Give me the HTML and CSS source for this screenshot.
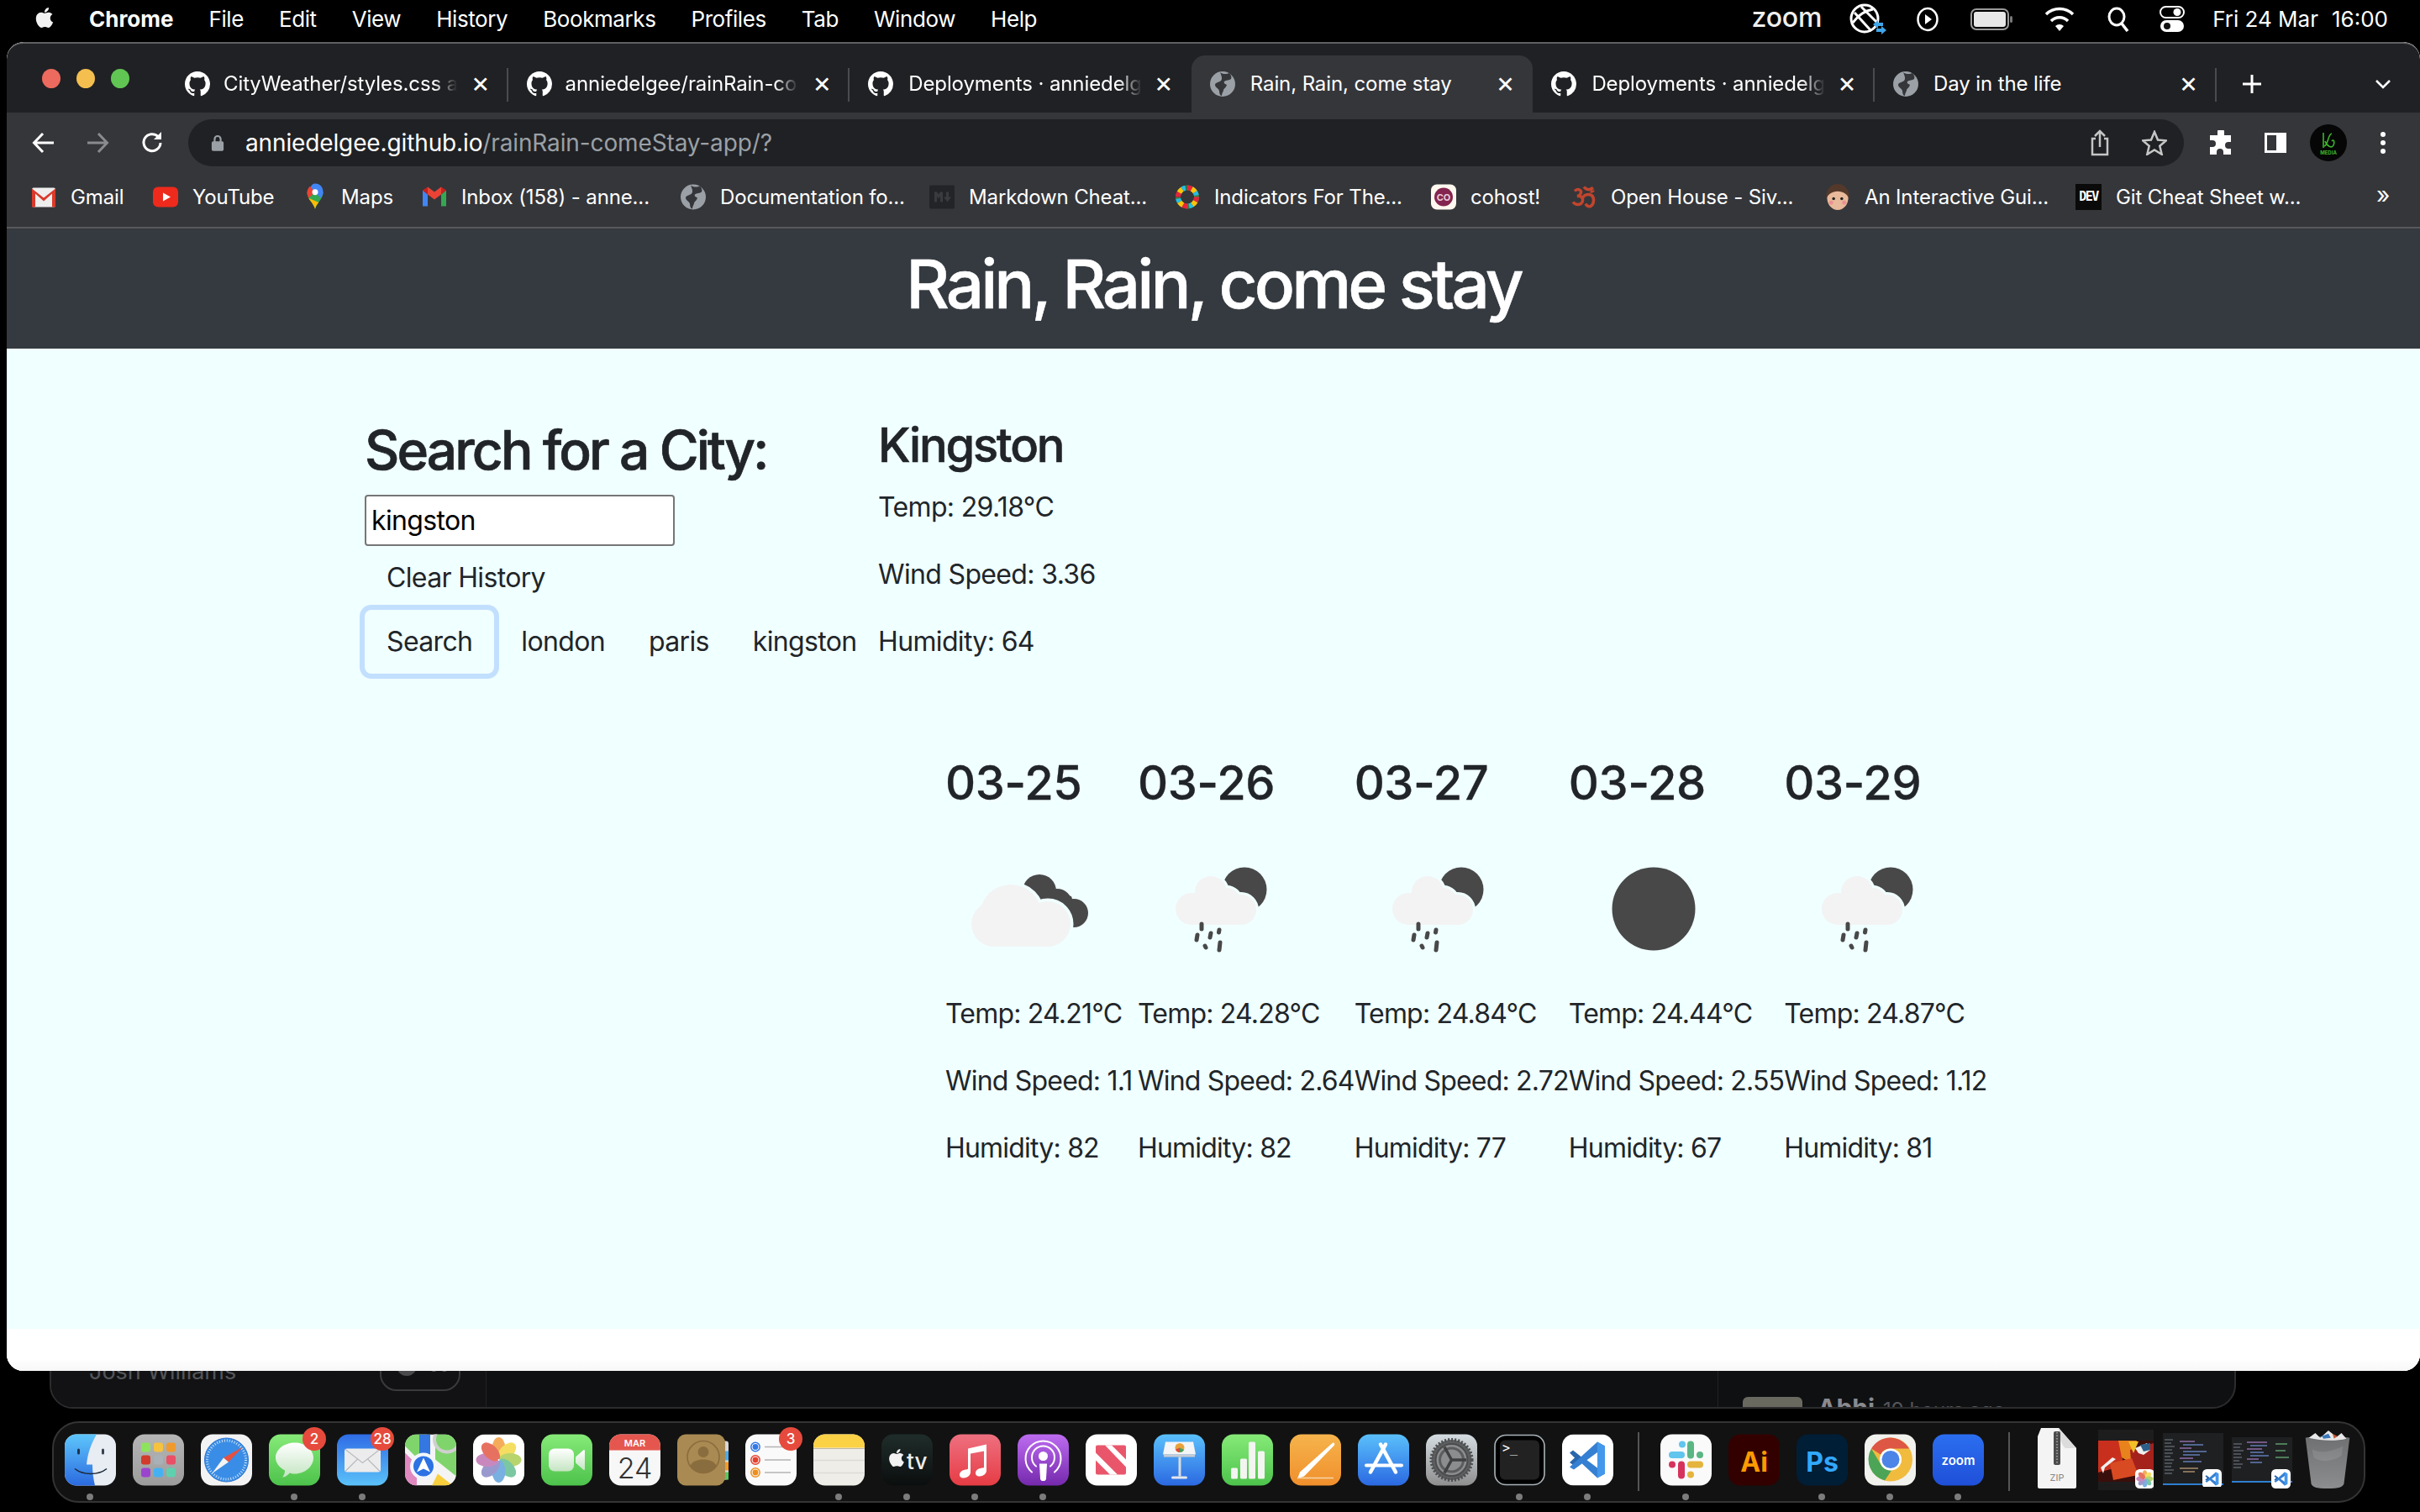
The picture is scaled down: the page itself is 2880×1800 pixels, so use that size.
FILE: index.html
```html
<!DOCTYPE html>
<html lang="en">
<head>
<meta charset="utf-8">
<title>Rain, Rain, come stay</title>
<link rel="stylesheet" href="styles.css">
</head>
<body>
<svg class="defs" width="0" height="0" aria-hidden="true">
  <defs>
    <linearGradient id="gFinder" x1="0" y1="0" x2="0" y2="1"><stop offset="0" stop-color="#5ec6fb"/><stop offset="1" stop-color="#2b6ae0"/></linearGradient>
    <linearGradient id="gGray" x1="0" y1="0" x2="0" y2="1"><stop offset="0" stop-color="#b6b6b6"/><stop offset="1" stop-color="#9c9c9c"/></linearGradient>
    <linearGradient id="gGreen" x1="0" y1="0" x2="0" y2="1"><stop offset="0" stop-color="#86ea78"/><stop offset="1" stop-color="#4dc34c"/></linearGradient>
    <linearGradient id="gMail" x1="0" y1="0" x2="0" y2="1"><stop offset="0" stop-color="#2f6ce6"/><stop offset="1" stop-color="#5bc2f9"/></linearGradient>
    <linearGradient id="gBlue" x1="0" y1="0" x2="0" y2="1"><stop offset="0" stop-color="#5ac0fb"/><stop offset="1" stop-color="#2b69e2"/></linearGradient>
    <linearGradient id="gBubble" x1="0" y1="0" x2="0" y2="1"><stop offset="0" stop-color="#fff"/><stop offset="1" stop-color="#c4e5c2"/></linearGradient>
    <linearGradient id="gMusic" x1="0" y1="0" x2="0" y2="1"><stop offset="0" stop-color="#ee7080"/><stop offset="1" stop-color="#e63c44"/></linearGradient>
    <linearGradient id="gPod" x1="0" y1="0" x2="0" y2="1"><stop offset="0" stop-color="#bd6cf0"/><stop offset="1" stop-color="#7529ad"/></linearGradient>
    <linearGradient id="gPages" x1="0" y1="0" x2="0" y2="1"><stop offset="0" stop-color="#f6b44c"/><stop offset="1" stop-color="#f08f2c"/></linearGradient>
    <linearGradient id="gTv" x1="0" y1="0" x2="0" y2="1"><stop offset="0" stop-color="#1f2d2a"/><stop offset="1" stop-color="#0b0e0e"/></linearGradient>
    <linearGradient id="gSet" x1="0" y1="0" x2="0" y2="1"><stop offset="0" stop-color="#d5dde2"/><stop offset="1" stop-color="#8f8f8f"/></linearGradient>
    <linearGradient id="gZoom" x1="0" y1="0" x2="0" y2="1"><stop offset="0" stop-color="#2b6ef0"/><stop offset="1" stop-color="#1f4fd8"/></linearGradient>
    <linearGradient id="gTrash" x1="0" y1="0" x2="0" y2="1"><stop offset="0" stop-color="#6f7072"/><stop offset="1" stop-color="#8c8d8f"/></linearGradient>
    <symbol id="gh" viewBox="0 0 16 16"><path fill="#fff" d="M8 0C3.58 0 0 3.58 0 8c0 3.54 2.29 6.53 5.47 7.59.4.07.55-.17.55-.38 0-.19-.01-.82-.01-1.49-2.01.37-2.53-.49-2.69-.94-.09-.23-.48-.94-.82-1.13-.28-.15-.68-.52-.01-.53.63-.01 1.08.58 1.23.82.72 1.21 1.87.87 2.33.66.07-.52.28-.87.51-1.07-1.78-.2-3.64-.89-3.64-3.95 0-.87.31-1.59.82-2.15-.08-.2-.36-1.02.08-2.12 0 0 .67-.21 2.2.82.64-.18 1.32-.27 2-.27.68 0 1.36.09 2 .27 1.53-1.04 2.2-.82 2.2-.82.44 1.1.16 1.92.08 2.12.51.56.82 1.27.82 2.15 0 3.07-1.87 3.75-3.65 3.95.29.25.54.73.54 1.48 0 1.07-.01 1.93-.01 2.2 0 .21.15.46.55.38A8.013 8.013 0 0016 8c0-4.42-3.58-8-8-8z"/></symbol>
    <symbol id="globe" viewBox="0 0 30 30"><circle cx="15" cy="15" r="15" fill="#9aa0a6"/><path fill="#35363a" d="M12 1c3 3 9 2 11 1 2 2 3 5 2 7-2 2-6 1-8 3-1 2 1 3 3 4-1 4-4 4-4 7-1 2-2 4-2 6-2 0-3-3-3-6-1-3-5-4-5-7 0-3 5-3 7-5 2-2 1-5-1-10z"/></symbol>
    <symbol id="apple" viewBox="0 0 24 24"><path fill="currentColor" d="M17.05 20.28c-.98.95-2.05.8-3.08.35-1.09-.46-2.09-.48-3.24 0-1.44.62-2.2.44-3.06-.35C2.79 15.25 3.51 7.59 9.05 7.31c1.35.07 2.29.74 3.08.8 1.18-.24 2.31-.93 3.57-.84 1.51.12 2.65.72 3.4 1.8-3.12 1.87-2.38 5.98.48 7.13-.57 1.5-1.31 2.99-2.54 4.09zM12.03 7.25c-.15-2.23 1.66-4.07 3.74-4.25.29 2.58-2.34 4.5-3.74 4.25z"/></symbol>
    <symbol id="petals" viewBox="0 0 61 61">
      <rect width="61" height="61" rx="14" fill="#fff"/>
      <g opacity=".82">
        <ellipse cx="30.5" cy="17" rx="8" ry="13.5" fill="#f29a38"/>
        <ellipse cx="30.5" cy="17" rx="8" ry="13.5" fill="#f4d63f" transform="rotate(45 30.5 30.5)"/>
        <ellipse cx="30.5" cy="17" rx="8" ry="13.5" fill="#a9cb4e" transform="rotate(90 30.5 30.5)"/>
        <ellipse cx="30.5" cy="17" rx="8" ry="13.5" fill="#5fbb8e" transform="rotate(135 30.5 30.5)"/>
        <ellipse cx="30.5" cy="17" rx="8" ry="13.5" fill="#5b9fdc" transform="rotate(180 30.5 30.5)"/>
        <ellipse cx="30.5" cy="17" rx="8" ry="13.5" fill="#8583c4" transform="rotate(225 30.5 30.5)"/>
        <ellipse cx="30.5" cy="17" rx="8" ry="13.5" fill="#bd6fb0" transform="rotate(270 30.5 30.5)"/>
        <ellipse cx="30.5" cy="17" rx="8" ry="13.5" fill="#e2533f" transform="rotate(315 30.5 30.5)"/>
      </g>
      <circle cx="30.5" cy="30.5" r="1" fill="#fff"/>
    </symbol>
    <symbol id="code" viewBox="0 0 61 61">
      <rect width="61" height="61" rx="14" fill="#fff"/>
      <path fill="#2a66ad" d="M9 22l4-3 10 8-4 5-6 4.500-4-3 6-5.500z"/>
      <path fill="#3580d2" d="M42 9l9 5v33l-9 5-23-21.500 5-4 18 13.500V21.500L14 42l-5-3z"/>
      <path fill="#4498ec" d="M42 9l9 5v33l-9 5z"/>
    </symbol>
    <symbol id="gear" viewBox="0 0 61 61">
      <circle cx="30.500" cy="30.500" r="24" fill="#5d5f60" stroke="#4d4f50" stroke-width="4" stroke-dasharray="2 2"/>
      <circle cx="30.500" cy="30.500" r="19" fill="#8b8d8e" stroke="#4a4c4d" stroke-width="2"/>
      <circle cx="30.500" cy="30.500" r="14" fill="none" stroke="#5a5c5d" stroke-width="3"/>
      <path stroke="#3f4142" stroke-width="3.500" fill="none" d="M30.500 30.500L22 15M30.500 30.500L48 30.500M30.500 30.500L22 46"/>
    </symbol>
    <g id="rain-cloud"><circle cx="87" cy="80" r="19"/><circle cx="64" cy="100" r="19"/><circle cx="123" cy="101" r="18"/><circle cx="106" cy="91" r="16"/><rect x="64" y="90" width="60" height="29"/></g>
    <symbol id="wx-rain" viewBox="0 0 200 200">
      <circle cx="127" cy="77" r="26.500" fill="#484849"/>
      <use href="#rain-cloud" fill="#f0ffff" stroke="#f0ffff" stroke-width="6"/>
      <use href="#rain-cloud" fill="#f3f3f3"/>
      <g fill="none" stroke="#484849" stroke-width="5" stroke-linecap="round"><path d="M76 118v6M71 131l-1 6M87 129l-1 5M97 125l-.5 3M80 144l1 2M98 140l-1 9"/></g>
    </symbol>
    <g id="broken-cloud"><circle cx="78" cy="108" r="37"/><circle cx="58" cy="118" r="27"/><circle cx="122" cy="118" r="27"/><rect x="58" y="105" width="64" height="40"/></g>
  </defs>
</svg>

<div class="desktop">
  <div class="backdrop">
    <div class="back-pane back-left">
      <span class="back-name">Josh Williams</span>
      <span class="back-toggle"><i></i>00</span>
    </div>
    <div class="back-pane back-middle"></div>
    <div class="back-pane back-right">
      <span class="back-avatar"></span><span class="back-abhi">Abhi</span><span class="back-time">19 hours ago</span>
    </div>
  </div>

  <header class="menubar">
    <svg class="apple"><use href="#apple"/></svg>
    <span class="menu-item menu-app">Chrome</span>
    <span class="menu-item">File</span>
    <span class="menu-item">Edit</span>
    <span class="menu-item">View</span>
    <span class="menu-item">History</span>
    <span class="menu-item">Bookmarks</span>
    <span class="menu-item">Profiles</span>
    <span class="menu-item">Tab</span>
    <span class="menu-item">Window</span>
    <span class="menu-item">Help</span>
    <div class="status">
      <span class="status-zoom">zoom</span>
      <svg class="st st-sync" viewBox="0 0 44 40"><circle cx="18" cy="19" r="16" fill="none" stroke="#fff" stroke-width="3"/><path fill="none" stroke="#fff" stroke-width="3" d="M6 12l20 22M14 5l20 20M4 24c8-10 14-14 24-16"/><path fill="#3ea6ea" d="M28 26l6-5v3h6v4h-6v3zM44 33l-6-5v3h-6v4h6v3z"/></svg>
      <svg class="st st-play" viewBox="0 0 26 30"><ellipse cx="13" cy="15" rx="11.500" ry="13" fill="none" stroke="#fff" stroke-width="2.500"/><path fill="#fff" d="M10 9l8 6-8 6z"/></svg>
      <svg class="st st-batt" viewBox="0 0 50 26"><rect x="1" y="1" width="44" height="24" rx="6" fill="none" stroke="#9a9a9a" stroke-width="2"/><rect x="4" y="4" width="38" height="18" rx="3" fill="#e8e8e8"/><rect x="47" y="9" width="3" height="8" rx="1.500" fill="#777"/></svg>
      <svg class="st st-wifi" viewBox="0 0 36 30"><path fill="#fff" d="M18 29l-5-6a7 7 0 0 1 10 0z"/><path fill="none" stroke="#fff" stroke-width="3.500" d="M8 17a14 14 0 0 1 20 0M2 9a23 23 0 0 1 32 0"/></svg>
      <svg class="st st-search" viewBox="0 0 26 30"><ellipse cx="11" cy="12" rx="9" ry="10" fill="none" stroke="#fff" stroke-width="3"/><path stroke="#fff" stroke-width="3.500" d="M17 20l7 9"/></svg>
      <svg class="st st-ctrl" viewBox="0 0 30 32"><rect x="1" y="1" width="28" height="13" rx="6.500" fill="none" stroke="#fff" stroke-width="2"/><circle cx="21" cy="7.500" r="4.500" fill="#fff"/><rect x="1" y="17" width="28" height="14" rx="7" fill="#fff"/><circle cx="9" cy="24" r="4" fill="#111"/></svg>
      <span class="clock"><span>Fri 24 Mar</span><span>16:00</span></span>
    </div>
  </header>

  <div class="window">
    <div class="tabstrip">
      <div class="lights"><i class="light red"></i><i class="light amber"></i><i class="light green"></i></div>
      <div class="tabs">
        <div class="tab sep"><svg class="fav"><use href="#gh"/></svg><span class="tab-title">CityWeather/styles.css a</span><span class="tab-x">×</span></div>
        <div class="tab sep"><svg class="fav"><use href="#gh"/></svg><span class="tab-title">anniedelgee/rainRain-co</span><span class="tab-x">×</span></div>
        <div class="tab"><svg class="fav"><use href="#gh"/></svg><span class="tab-title">Deployments · anniedelg</span><span class="tab-x">×</span></div>
        <div class="tab active"><svg class="fav"><use href="#globe"/></svg><span class="tab-title tab-title-full">Rain, Rain, come stay</span><span class="tab-x">×</span></div>
        <div class="tab sep"><svg class="fav"><use href="#gh"/></svg><span class="tab-title">Deployments · anniedelg</span><span class="tab-x">×</span></div>
        <div class="tab sep"><svg class="fav"><use href="#globe"/></svg><span class="tab-title tab-title-full">Day in the life</span><span class="tab-x">×</span></div>
      </div>
      <svg class="newtab" viewBox="0 0 24 24"><path stroke="#fff" stroke-width="3" d="M12 1v22M1 12h22"/></svg>
      <svg class="tabmenu" viewBox="0 0 20 12"><path fill="none" stroke="#fff" stroke-width="2.500" d="M2 2l8 8 8-8"/></svg>
    </div>

    <div class="toolbar">
      <div class="navrow">
        <svg class="nav nav-back" viewBox="0 0 28 28"><path fill="none" stroke="#fff" stroke-width="3" d="M26 14H3M13 3L2.500 14 13 25"/></svg>
        <svg class="nav nav-fwd" viewBox="0 0 28 28"><path fill="none" stroke="#8a8b8e" stroke-width="3" d="M2 14h23M15 3l10.500 11L15 25"/></svg>
        <svg class="nav nav-reload" viewBox="0 0 28 28"><path fill="none" stroke="#fff" stroke-width="3" d="M24 14a10 10 0 1 1-3-7.500"/><path fill="#fff" d="M25 1v9h-9z"/></svg>
        <div class="omnibox">
          <svg class="lock" viewBox="0 0 18 24"><path fill="none" stroke="#9aa0a6" stroke-width="2.500" d="M5 11V7a4 4 0 0 1 8 0v4"/><rect x="1" y="10" width="16" height="13" rx="2" fill="#9aa0a6"/></svg>
          <span class="url"><b>anniedelgee.github.io</b>/rainRain-comeStay-app/?</span>
          <svg class="omni-share" viewBox="0 0 24 32"><path fill="none" stroke="#c4c7c5" stroke-width="2.500" d="M7 11H3v19h18V11h-4M12 21V2M6 8l6-6 6 6"/></svg>
          <svg class="omni-star" viewBox="0 0 30 30"><path fill="none" stroke="#c4c7c5" stroke-width="2.500" d="M15 2l4 9.500 10 .8-7.700 6.500 2.400 10L15 23.500l-8.700 5.300 2.400-10L1 12.300l10-.8z"/></svg>
        </div>
        <svg class="tool tool-ext" viewBox="0 0 30 30"><path fill="#fff" d="M11 2a4 4 0 0 1 8 0v4h8v8h-3a4 4 0 0 0 0 8h3v7H18v-3a4 4 0 0 0-8 0v3H2v-9h3a4 4 0 0 0 0-8H2V6h9z"/></svg>
        <svg class="tool tool-panel" viewBox="0 0 30 30"><path fill="#fff" fill-rule="evenodd" d="M2 3h26v24H2zM5 6v18h11V6z"/></svg>
        <svg class="tool-avatar" viewBox="0 0 44 44"><circle cx="22" cy="22" r="22" fill="#050605"/><path fill="none" stroke="#3cb52b" stroke-width="1.600" d="M16 10v18M17 26c5-1 4-14 9-15M18 20c2 6 8 9 10 5s0-8-2-5"/><text x="22" y="36" class="avatar-text">MEDIA</text></svg>
        <svg class="tool tool-dots" viewBox="0 0 8 30"><circle cx="4" cy="5" r="3" fill="#fff"/><circle cx="4" cy="15" r="3" fill="#fff"/><circle cx="4" cy="25" r="3" fill="#fff"/></svg>
      </div>
      <nav class="bookmarks">
        <span class="bm"><svg class="bm-ico" viewBox="0 0 30 30"><rect x="1" y="4" width="28" height="23" rx="2" fill="#eee"/><path fill="#d93a2b" d="M1 5l14 11L29 5v22h-4V11L15 20 5 11v16H1z"/></svg>Gmail</span>
        <span class="bm"><svg class="bm-ico" viewBox="0 0 30 30"><rect x="0" y="3" width="30" height="24" rx="6" fill="#ee2a1c"/><path fill="#fff" d="M12 10l9 5-9 5z"/></svg>YouTube</span>
        <span class="bm"><svg class="bm-ico bm-pin" viewBox="0 0 30 36"><path fill="#34a853" d="M15 35c-3-9-11-14-11-23h22c0 9-8 14-11 23z"/><path fill="#fbbc04" d="M6 20c2 4 7 8 9 15 1-4 3-7 5-9z"/><path fill="#4285f4" d="M15 0c7 0 11 5 11 12 0 3-1 5-3 8L8 6c2-4 4-6 7-6z"/><path fill="#ea4335" d="M8 4l7 8-9 8c-1-2-2-5-2-8 0-3 2-6 4-8z"/><circle cx="15" cy="12" r="4" fill="#fff"/></svg>Maps</span>
        <span class="bm"><svg class="bm-ico" viewBox="0 0 30 30"><path fill="#4285f4" d="M1 7v19h6V12z"/><path fill="#34a853" d="M23 12v14h6V7z"/><path fill="#ea4335" d="M7 3v9l8 6 8-6V3l-8 6z"/><path fill="#c5221f" d="M1 7l6-4v9zM29 7l-6-4v9z"/></svg>Inbox (158) - anne...</span>
        <span class="bm"><svg class="bm-ico"><use href="#globe"/></svg>Documentation fo...</span>
        <span class="bm"><svg class="bm-ico bm-md" viewBox="0 0 30 30"><rect x="0" y="1" width="30" height="28" rx="2" fill="#232427"/><path fill="#3a3b3e" d="M6 9h3l2 3 2-3h3v12h-3v-7l-2 3-2-3v7H6zM20 9h3v6h3l-4.500 6-4.500-6h3z"/></svg>Markdown Cheat...</span>
        <span class="bm"><svg class="bm-ico" viewBox="0 0 30 30"><g fill="none" stroke-width="6"><circle cx="15" cy="15" r="11" stroke="#3f7e44" stroke-dasharray="4 1"/><circle cx="15" cy="15" r="11" stroke="#e5243b" pathLength="100" stroke-dasharray="8 17"/><circle cx="15" cy="15" r="11" stroke="#fcc30b" pathLength="100" stroke-dashoffset="-8" stroke-dasharray="8 17"/><circle cx="15" cy="15" r="11" stroke="#26bde2" pathLength="100" stroke-dashoffset="-16" stroke-dasharray="6 19"/></g></svg>Indicators For The...</span>
        <span class="bm"><svg class="bm-ico" viewBox="0 0 30 30"><rect width="30" height="30" rx="7" fill="#fff8ef"/><circle cx="15" cy="15" r="11" fill="#83254f"/><text x="15" y="19" class="co-text">CO</text></svg>cohost!</span>
        <span class="bm"><svg class="bm-ico" viewBox="0 0 30 30"><g fill="none" stroke="#c2452d" stroke-width="3.500"><path d="M4 8c4-4 9-1 7 3-1 2-3 3-4 3 4-1 8 2 6 7-2 4-8 4-11 0"/><path d="M13 17c2-5 7-6 11-4 4 3 3 11-1 13-3 1-5-1-6-3"/><path d="M15 3c3 4 7 4 11 1M23 8c1 1 3 0 3-1"/></g></svg>Open House - Siv...</span>
        <span class="bm"><svg class="bm-ico" viewBox="0 0 30 32"><ellipse cx="15" cy="17" rx="13" ry="15" fill="#e8b99a"/><path fill="#54392a" d="M1 18C0 6 8 0 15 0s15 6 14 18c-2-5-7-9-14-9S3 13 1 18z"/><circle cx="10" cy="18" r="1.800" fill="#222"/><circle cx="20" cy="18" r="1.800" fill="#222"/><circle cx="7" cy="23" r="2.500" fill="#ec8f92"/><circle cx="23" cy="23" r="2.500" fill="#ec8f92"/></svg>An Interactive Gui...</span>
        <span class="bm"><span class="dev">DEV</span>Git Cheat Sheet w...</span>
        <span class="bm-more">»</span>
      </nav>
    </div>

    <main class="page">
      <header class="page-head"><h1>Rain, Rain, come stay</h1></header>
      <div class="content">
        <section class="search">
          <h2>Search for a City:</h2>
          <input class="city-input" type="text" value="kingston">
          <div class="btn-row"><button class="btn" type="button">Clear History</button></div>
          <div class="btn-row">
            <button class="btn btn-focus" type="button">Search</button>
            <button class="btn" type="button">london</button>
            <button class="btn" type="button">paris</button>
            <button class="btn" type="button">kingston</button>
          </div>
        </section>
        <section class="results">
          <h3 class="city">Kingston</h3>
          <p>Temp: 29.18°C</p>
          <p>Wind Speed: 3.36</p>
          <p>Humidity: 64</p>
          <div class="forecast">
            <article class="day">
              <h3>03-25</h3>
              <svg class="wx" viewBox="0 0 200 200"><g fill="#484849"><circle cx="112" cy="79" r="20"/><circle cx="133" cy="94" r="18"/><circle cx="153" cy="105" r="17"/><path d="M100 75l50 10 10 30-28 7z"/></g><use href="#broken-cloud" fill="#f0ffff" stroke="#f0ffff" stroke-width="7"/><use href="#broken-cloud" fill="#f3f3f3"/></svg>
              <p>Temp: 24.21°C</p><p>Wind Speed: 1.1</p><p>Humidity: 82</p>
            </article>
            <article class="day">
              <h3>03-26</h3>
              <svg class="wx"><use href="#wx-rain"/></svg>
              <p>Temp: 24.28°C</p><p>Wind Speed: 2.64</p><p>Humidity: 82</p>
            </article>
            <article class="day">
              <h3>03-27</h3>
              <svg class="wx"><use href="#wx-rain"/></svg>
              <p>Temp: 24.84°C</p><p>Wind Speed: 2.72</p><p>Humidity: 77</p>
            </article>
            <article class="day">
              <h3>03-28</h3>
              <svg class="wx" viewBox="0 0 200 200"><circle cx="101" cy="100" r="49.500" fill="#484849"/></svg>
              <p>Temp: 24.44°C</p><p>Wind Speed: 2.55</p><p>Humidity: 67</p>
            </article>
            <article class="day">
              <h3>03-29</h3>
              <svg class="wx"><use href="#wx-rain"/></svg>
              <p>Temp: 24.87°C</p><p>Wind Speed: 1.12</p><p>Humidity: 81</p>
            </article>
          </div>
        </section>
      </div>
    </main>
    <div class="page-foot"></div>
  </div>

  <footer class="dock">
    <div class="app on"><svg viewBox="0 0 61 61"><rect width="61" height="61" rx="14" fill="#e8ecf3"/><path fill="url(#gFinder)" d="M14 0h24c-7 12-11 24-12 36h7c0 8 1 17 3 25H14A14 14 0 0 1 0 47V14A14 14 0 0 1 14 0z"/><rect x="15" y="17" width="3" height="7" rx="1.500" fill="#1e3350"/><rect x="44" y="17" width="3" height="7" rx="1.500" fill="#37424f"/><path fill="none" stroke="#1b2734" stroke-width="1.600" d="M12 41c10 8 28 8 38 0"/></svg></div>
    <div class="app"><svg viewBox="0 0 61 61"><rect width="61" height="61" rx="14" fill="url(#gGray)"/><g><rect x="10" y="10" width="11" height="11" rx="3" fill="#8ee35c"/><rect x="25" y="10" width="11" height="11" rx="3" fill="#f6c33e"/><rect x="40" y="10" width="11" height="11" rx="3" fill="#ef9a2d"/><rect x="10" y="25" width="11" height="11" rx="3" fill="#d23a2b"/><rect x="25" y="25" width="11" height="11" rx="3" fill="#a9b1b6"/><rect x="40" y="25" width="11" height="11" rx="3" fill="#ea4f66"/><rect x="10" y="40" width="11" height="11" rx="3" fill="#9b45cf"/><rect x="25" y="40" width="11" height="11" rx="3" fill="#45b1f3"/><rect x="40" y="40" width="11" height="11" rx="3" fill="#5fd0ae"/></g></svg></div>
    <div class="app"><svg viewBox="0 0 61 61"><rect width="61" height="61" rx="14" fill="#f3f3f3"/><circle cx="30.500" cy="30.500" r="26" fill="#3a8de6" stroke="#2f76cf" stroke-width="1"/><circle cx="30.500" cy="30.500" r="23" fill="none" stroke="#cfe3f8" stroke-width="3" stroke-dasharray="1 2"/><path fill="#e8503f" d="M50 15L27 28l6 5z"/><path fill="#f4f4f4" d="M13 47l14-19 6 5z"/></svg></div>
    <div class="app on"><svg viewBox="0 0 61 61"><rect width="61" height="61" rx="14" fill="url(#gGreen)"/><path fill="url(#gBubble)" d="M31 10c12 0 22 8 22 18s-10 19-22 19c-2 0-4 0-6-1-3 3-6 5-9 5 2-2 3-5 3-8-6-3-11-9-11-15 0-10 10-18 23-18z"/></svg><span class="badge">2</span></div>
    <div class="app on"><svg viewBox="0 0 61 61"><rect width="61" height="61" rx="14" fill="url(#gMail)"/><rect x="9" y="17" width="43" height="28" rx="3" fill="#ececec"/><path fill="none" stroke="#b9bcc0" stroke-width="1.200" d="M10 18l20.500 16L51 18M10 44l15-15M51 44L36 29"/></svg><span class="badge badge-wide">28</span></div>
    <div class="app"><svg viewBox="0 0 61 61"><defs><clipPath id="cMap"><rect width="61" height="61" rx="14"/></clipPath></defs><g clip-path="url(#cMap)"><rect width="61" height="61" fill="#f4f4f4"/><path fill="#7fd56b" d="M26 0H0v14l16 16 10-10zM36 0h25v50L36 30z"/><path fill="#e088c0" d="M0 22l14 14v25H0z"/><path fill="#f7cf3d" d="M32 61l7-14 18 14z"/><rect x="16" y="0" width="13" height="34" fill="#3477e0" transform="translate(1 0)"/><circle cx="50" cy="6" r="15" fill="none" stroke="#cfcfcf" stroke-width="4"/><circle cx="22" cy="38" r="16" fill="#f2f6fb"/><circle cx="22" cy="38" r="12" fill="#2c72e4"/><path fill="#fff" d="M22 28l8 17-8-4-8 4z"/></g></svg></div>
    <div class="app"><svg viewBox="0 0 61 61"><use href="#petals"/></svg></div>
    <div class="app"><svg viewBox="0 0 61 61"><rect width="61" height="61" rx="14" fill="url(#gGreen)"/><rect x="9" y="17" width="30" height="27" rx="7" fill="url(#gBubble)"/><path fill="url(#gBubble)" d="M41 27l9-8c1-1 2 0 2 1v21c0 2-1 2-2 1l-9-8z"/></svg></div>
    <div class="app"><svg viewBox="0 0 61 61"><rect width="61" height="61" rx="14" fill="#f7f7f7"/><path fill="#e5574e" d="M14 0h33a14 14 0 0 1 14 14v5H0v-5A14 14 0 0 1 14 0z"/><text class="cal-mon" x="30.500" y="14.500">MAR</text><text class="cal-day" x="30.500" y="52">24</text></svg></div>
    <div class="app"><svg viewBox="0 0 61 61"><rect x="50" y="8" width="11" height="46" rx="3" fill="#d8d8d8"/><rect x="55" y="20" width="6" height="11" fill="#4fa9e6"/><rect x="55" y="33" width="6" height="10" fill="#f19a2c"/><rect x="55" y="45" width="6" height="9" fill="#5fc45f"/><rect width="57" height="61" rx="10" fill="#a98a52"/><circle cx="31" cy="27" r="19" fill="none" stroke="#8a6d3e" stroke-width="1.600"/><circle cx="31" cy="21" r="6.500" fill="#8a6d3e"/><path fill="#8a6d3e" d="M15 38c3-6 9-8 16-8s13 2 16 8c-4 5-10 8-16 8s-12-3-16-8z"/></svg></div>
    <div class="app"><svg viewBox="0 0 61 61"><rect width="61" height="61" rx="14" fill="#fafafa"/><g fill="none" stroke-width="1.500"><circle cx="12" cy="15" r="5.200" stroke="#3178e8"/><circle cx="12" cy="30.500" r="5.200" stroke="#e5412f"/><circle cx="12" cy="45.500" r="5.200" stroke="#ed8f1e"/></g><circle cx="12" cy="15" r="3.400" fill="#3178e8"/><circle cx="12" cy="30.500" r="3.400" fill="#e5412f"/><circle cx="12" cy="45.500" r="3.400" fill="#ed8f1e"/><path stroke="#b4b4b4" stroke-width="1.400" d="M23 15h31M23 30.500h31M23 45.500h31"/></svg><span class="badge">3</span></div>
    <div class="app on"><svg viewBox="0 0 61 61"><rect width="61" height="61" rx="14" fill="#eeede8"/><path fill="#fbd146" d="M14 0h33a14 14 0 0 1 14 14v2H0v-2A14 14 0 0 1 14 0z"/><path stroke="#bdb9a8" stroke-width="1.200" d="M0 17h61"/><path stroke="#dcdbd5" stroke-width="1.500" d="M0 31h61M0 46h61"/></svg></div>
    <div class="app on"><svg viewBox="0 0 61 61"><rect width="61" height="61" rx="14" fill="url(#gTv)"/><svg x="4" y="14" width="28" height="28" color="#f2f2f2"><use href="#apple"/></svg><text class="tv-text" x="30" y="41">tv</text></svg></div>
    <div class="app on"><svg viewBox="0 0 61 61"><rect width="61" height="61" rx="14" fill="url(#gMusic)"/><path fill="#fff" d="M22 17l22-5v31c0 4-4 7-8 7s-5-2-5-4c0-4 5-6 9-6 1 0 1-1 1-1V20l-16 3v22c0 4-4 7-8 7s-5-2-5-4c0-4 5-6 8-6 1 0 2-1 2-1z"/></svg></div>
    <div class="app on"><svg viewBox="0 0 61 61"><rect width="61" height="61" rx="14" fill="url(#gPod)"/><g fill="none" stroke="#fff" stroke-width="2" stroke-linecap="round"><path d="M17 45a21 21 0 1 1 27 0"/><path d="M22 38a13.500 13.500 0 1 1 17 0"/></g><circle cx="30.500" cy="26" r="5.500" fill="#fff"/><path fill="#fff" d="M26 35h9l-1 18c-.4 2-1.500 2.500-3.500 2.500s-3-.5-3.500-2.500z"/></svg></div>
    <div class="app"><svg viewBox="0 0 61 61"><rect width="61" height="61" rx="14" fill="#fff"/><rect x="12" y="13" width="36" height="35" rx="2" fill="#e9566b"/><path fill="#fff" d="M23 13h8l17 17v9zM12 22l26 26h-9L12 31z"/></svg></div>
    <div class="app"><svg viewBox="0 0 61 61"><rect width="61" height="61" rx="14" fill="url(#gBlue)"/><path fill="#f4f5f7" d="M14 9h33l3 15H11z"/><circle cx="31" cy="16" r="5.500" fill="#e9a23b"/><path fill="#4aa060" d="M31 16v5.500a5.500 5.500 0 0 0 5-3z"/><path fill="#d94c3d" d="M31 16l-5 2a5.500 5.500 0 0 0 5 3.500z"/><rect x="12" y="24" width="37" height="3" fill="#c8ccd2"/><rect x="29.500" y="27" width="3" height="23" fill="#d8dce0"/><rect x="21" y="50" width="19" height="3" rx="1.500" fill="#e4e6ea"/></svg></div>
    <div class="app"><svg viewBox="0 0 61 61"><rect width="61" height="61" rx="14" fill="url(#gGreen)"/><rect x="11" y="40" width="8" height="13" rx="1.500" fill="#f2f5f0"/><rect x="22" y="29" width="8" height="24" rx="1.500" fill="#f2f5f0"/><rect x="32" y="9" width="8" height="44" rx="1.500" fill="#f2f5f0"/><rect x="43" y="20" width="8" height="33" rx="1.500" fill="#f2f5f0"/></svg></div>
    <div class="app"><svg viewBox="0 0 61 61"><rect width="61" height="61" rx="14" fill="url(#gPages)"/><path fill="#fff" d="M50 11c2-2 4-1 3 2L17 50l-8 3 3-8z"/><path stroke="#f7d6a8" stroke-width="1.600" d="M9 52h43"/></svg></div>
    <div class="app"><svg viewBox="0 0 61 61"><rect width="61" height="61" rx="14" fill="url(#gBlue)"/><g fill="none" stroke="#fff" stroke-width="4.500" stroke-linecap="round"><path d="M33 12L15 45M27 12l18 33"/><path stroke-width="4" d="M10 37h42"/></g></svg></div>
    <div class="app"><svg viewBox="0 0 61 61"><rect width="61" height="61" rx="14" fill="url(#gSet)"/><use href="#gear"/></svg></div>
    <div class="app on"><svg viewBox="0 0 61 61"><rect x="1" y="1" width="59" height="59" rx="13" fill="#000" stroke="#a9b3b8" stroke-width="1.600"/><rect x="7" y="7" width="47" height="47" rx="6" fill="#222"/><text class="term" x="10" y="21">&gt;_</text></svg></div>
    <div class="app on"><svg viewBox="0 0 61 61"><use href="#code"/></svg></div>
    <i class="dock-sep"></i>
    <div class="app on"><svg viewBox="0 0 61 61"><rect width="61" height="61" rx="14" fill="#fafafa"/><g stroke-linecap="round" stroke-width="8" fill="none"><path stroke="#61c5ee" d="M14 24.500h11"/><path stroke="#61c5ee" d="M26 12v0"/><path stroke="#5ab684" d="M36 12v13"/><path stroke="#5ab684" d="M47 24.500v0"/><path stroke="#d6335c" d="M25 36v13"/><path stroke="#d6335c" d="M14 36v0"/><path stroke="#e5b43c" d="M36 36h11"/><path stroke="#e5b43c" d="M36 48v0"/></g></svg></div>
    <div class="app"><svg viewBox="0 0 61 61"><rect width="61" height="61" rx="14" fill="#300"/><text class="adobe ai" x="30.500" y="44">Ai</text></svg></div>
    <div class="app on"><svg viewBox="0 0 61 61"><rect width="61" height="61" rx="14" fill="#001e36"/><text class="adobe ps" x="30.500" y="44">Ps</text></svg></div>
    <div class="app on"><svg viewBox="0 0 61 61"><rect width="61" height="61" rx="14" fill="#f1f1ee"/><circle cx="31" cy="30" r="26" fill="#f1bb3e"/><path fill="#dd5744" d="M8 17a26 26 0 0 1 45 0H31a13 13 0 0 0-12 7z"/><path fill="#4ca457" d="M8 17l12 20c3 4 7 6 12 6L24 55A26 26 0 0 1 8 17z"/><circle cx="31" cy="30" r="13" fill="#fff"/><circle cx="31" cy="30" r="10.500" fill="#4d84e8"/></svg></div>
    <div class="app on"><svg viewBox="0 0 61 61"><rect width="61" height="61" rx="14" fill="url(#gZoom)"/><text class="zoom-text" x="30.500" y="36">zoom</text></svg></div>
    <i class="dock-sep dock-sep-2"></i>
    <div class="app doc"><svg viewBox="0 0 46 72"><path fill="#f4f4f4" d="M4 0h21l21 24v46a2 2 0 0 1-2 2H2a2 2 0 0 1-2-2V10z"/><path fill="#dcdcdc" d="M25 0c1 9 2 19 8 24h13z"/><rect x="19" y="4" width="8" height="40" rx="2" fill="#4c4c4c"/><path stroke="#ddd" stroke-width="1" stroke-dasharray="1.500 2" d="M23 5v38"/><text class="zip" x="23" y="63">ZIP</text></svg></div>
    <div class="app thumb thumb-art"><svg viewBox="0 0 66 72"><rect width="66" height="72" fill="#1d1d1e"/><rect y="13" width="66" height="49" fill="#3a0e0a"/><path fill="#c8301d" d="M0 13h26l4 30-30 8z"/><path fill="#e8821c" d="M24 13h22l-8 26-10-6z"/><path fill="#a5211c" d="M38 24l28-8v36l-26-2z"/><path fill="#f0c028" d="M36 14h12l-6 14z"/><path fill="#d84a22" d="M14 40l26-6 8 20-30 6z"/><path fill="#eee" d="M44 22l14-6 4 8-8 6-6-2zM3 45l14-12 4 2-13 10-2 7z"/><path fill="#2c5f8a" d="M50 18l12-2v8l-8 2z"/><svg x="44" y="47" width="23" height="23"><use href="#petals"/></svg></svg></div>
    <div class="app thumb thumb-code"><svg viewBox="0 0 72 64"><rect width="72" height="62" fill="#1f2022"/><rect y="60" width="72" height="2" fill="#2f7fd0"/><g stroke-width="1"><path stroke="#79808a" d="M2 8h10M2 12h8M2 16h12M2 20h9M2 24h10M2 28h7M2 32h11M2 36h9M2 40h8M2 44h11M2 48h9"/><path stroke="#c792ea" d="M20 10h18M20 18h14M20 30h16"/><path stroke="#82aaff" d="M24 14h24M24 22h28M24 26h20M24 34h22"/><path stroke="#ecc48d" d="M20 42h22M24 46h14"/></g><svg x="47" y="43" width="23" height="23"><use href="#code"/></svg></svg></div>
    <div class="app thumb thumb-code2"><svg viewBox="0 0 72 61"><rect width="72" height="54" fill="#1f2022"/><rect y="52" width="72" height="2" fill="#2f7fd0"/><g stroke-width="1"><path stroke="#79808a" d="M2 8h10M2 12h8M2 16h12M2 20h9M2 24h10M2 28h7M2 32h11M2 36h9"/><path stroke="#c792ea" d="M18 6h24M18 14h18M18 26h14"/><path stroke="#82aaff" d="M22 10h20M22 18h16M22 22h22M22 30h14"/><path stroke="#7fd88f" d="M52 8h14M52 16h12M52 24h16"/></g><svg x="47" y="38" width="23" height="23"><use href="#code"/></svg></svg></div>
    <div class="app trash"><svg viewBox="0 0 54 72"><path fill="url(#gTrash)" d="M0 10c8-2 46-2 54 0l-7 56c-1 4-6 6-20 6S8 70 7 66z"/><path fill="#fff" opacity=".1" d="M8 24c10 6 26 2 38-4l-2 12c-12 8-26 8-34 2z"/><path fill="#e8e8e8" d="M4 10l8-6 6 6 10-9 10 8 6-5 6 7c-12 3-30 3-46-1z"/><path fill="#3a78b8" d="M20 8l8-3 3 5-9 1z"/><path fill="#c25a34" d="M33 5l6 3-4 3z"/></svg></div>
  </footer>
</div>
</body>
</html>
```

FILE: styles.css
```css
* { box-sizing: border-box; }
html, body { margin: 0; padding: 0; background: #000; }
body { width: 2880px; height: 1800px; overflow: hidden; font-family: Inter, "Liberation Sans", sans-serif; }
.defs { position: absolute; }
.desktop { position: relative; width: 2880px; height: 1800px; display: flex; flex-direction: column; background: #000; overflow: hidden; }

/* window behind the browser */
.backdrop { position: absolute; left: 59px; top: 1400px; width: 2602px; height: 277px; display: flex; background: #0f1012; border: 2px solid #2c2c2e; border-radius: 0 0 28px 28px; overflow: hidden; color: #55565a; }
.back-pane { position: relative; height: 100%; }
.back-left { width: 518px; background: #121214; border-right: 1px solid #222; }
.back-middle { width: 1466px; border-right: 1px solid #222; }
.back-right { flex: 1; }
.back-name { position: absolute; left: 45px; top: 214px; font-size: 27px; white-space: nowrap; }
.back-toggle { position: absolute; left: 391px; top: 210px; width: 96px; height: 44px; border: 2px solid #3a3a3c; border-radius: 0 0 20px 20px; font-size: 20px; padding-left: 56px; }
.back-toggle i { position: absolute; left: 18px; top: 0; width: 24px; height: 24px; border-radius: 50%; background: #4a4a4c; }
.back-avatar { position: absolute; left: 29px; top: 261px; width: 71px; height: 60px; background: #6a6960; border-radius: 6px; }
.back-abhi { position: absolute; left: 118px; top: 256px; font-size: 30px; font-weight: 700; color: #8a8a8e; }
.back-time { position: absolute; left: 196px; top: 262px; font-size: 24px; white-space: nowrap; }

/* menu bar */
.menubar { position: relative; flex: 0 0 50px; height: 50px; display: flex; align-items: center; color: #fff; font-size: 26px; padding-left: 40px; background: #000; }
.apple { width: 32px; height: 36px; color: #f2f2f2; margin: -8px 37px 0 -3px; }
.menu-item { margin: -5px 42px 0 0; white-space: nowrap; letter-spacing: -.42px; }
.menu-app { font-weight: 700; letter-spacing: 0; }
.status { margin-left: auto; display: flex; align-items: center; padding-right: 38px; }
.status-zoom { font-size: 32px; font-weight: 500; letter-spacing: -.2px; margin-right: 33px; color: #eee; line-height: 1; margin-top: -8px; }
.st { flex: none; display: block; margin-top: -4px; }
.st-sync { width: 44px; height: 40px; margin-right: 36px; }
.st-play { width: 26px; height: 30px; margin-right: 38px; }
.st-batt { width: 50px; height: 26px; margin-right: 38px; }
.st-wifi { width: 36px; height: 30px; margin-right: 39px; }
.st-search { width: 26px; height: 30px; margin-right: 36px; }
.st-ctrl { width: 30px; height: 32px; margin-right: 33px; }
.clock { display: flex; gap: 16px; margin-top: -5px; }

/* browser window */
.window { position: relative; margin-left: 8px; width: 2872px; flex: 0 0 1582px; display: flex; flex-direction: column; border-radius: 20px; background: #fff; overflow: hidden; }
.tabstrip { flex: 0 0 84px; display: flex; align-items: flex-end; background: #202124; border-top: 2px solid #5f6062; border-radius: 20px 20px 0 0; color: #fff; }
.lights { align-self: flex-start; display: flex; gap: 19px; padding: 30px 44px 0 42px; }
.light { display: block; width: 22px; height: 23px; border-radius: 50%; }
.red { background: #ed6a5e; }
.amber { background: #f4bf4f; }
.green { background: #61c554; }
.tabs { display: flex; height: 68px; }
.tab { position: relative; flex: 0 0 406.600px; min-width: 0; display: flex; align-items: center; padding: 0 21px 0 22px; font-size: 24px; letter-spacing: -.1px; border-radius: 16px 16px 0 0; }
.tab:nth-child(-n+2) .fav { margin-right: 16px; }
.tab:nth-child(-n+2) .tab-title { margin-right: 16px; }
.tab.sep::after { content: ""; position: absolute; right: 0; top: 15px; height: 40px; width: 2px; background: #4a4b4e; }
.tab.active { background: #35363a; }
.fav { flex: none; width: 30px; height: 30px; margin-right: 18px; }
.tab-title { flex: 1; min-width: 0; white-space: nowrap; overflow: hidden; margin-right: 14px; -webkit-mask-image: linear-gradient(to right, #000 90%, transparent 100%); mask-image: linear-gradient(to right, #000 90%, transparent 100%); margin-top: -2px; }
.tab-title-full { -webkit-mask-image: none; mask-image: none; }
.tab-x { flex: none; width: 24px; text-align: center; font-size: 34px; line-height: 1; margin-top: -4px; }
.newtab { width: 24px; height: 24px; margin: 0 0 22px 30px; flex: none; }
.tabmenu { width: 20px; height: 12px; margin: 0 0 28px 134px; flex: none; }

.toolbar { flex: 0 0 138px; background: #35363a; border-bottom: 2px solid #58595c; display: flex; flex-direction: column; }
.navrow { height: 72px; display: flex; align-items: center; padding: 0 0 0 30px; }
.nav { flex: none; width: 28px; height: 28px; }
.nav-back { margin-right: 36px; }
.nav-fwd { margin-right: 37px; }
.nav-reload { margin-right: 29px; }
.omnibox { flex: 0 0 2375px; height: 56px; border-radius: 28px; background: #202124; display: flex; align-items: center; padding-left: 27px; }
.lock { width: 16px; height: 22px; margin-right: 25px; flex: none; }
.url { color: #9aa0a6; font-size: 28px; letter-spacing: -.13px; white-space: nowrap; margin-right: auto; }
.url b { color: #fff; font-weight: 400; }
.omni-share { width: 24px; height: 32px; margin-right: 38px; flex: none; }
.omni-star { width: 30px; height: 30px; margin-right: 20px; flex: none; }
.tool { flex: none; width: 30px; height: 30px; }
.tool-ext { margin-left: 29px; }
.tool-panel { margin-left: 35px; }
.tool-avatar { width: 44px; height: 44px; margin-left: 26px; flex: none; }
.avatar-text { font: 700 6px Inter, sans-serif; fill: #3cb52b; text-anchor: middle; }
.tool-dots { width: 8px; margin-left: 39px; }

.bookmarks { flex: 1; display: grid; align-items: center; grid-template-columns: 145px 181px 139px 308px 296px 292px 305px 167px 302px 298px 358px 1fr; padding: 0 0 8px 29px; color: #fff; font-size: 24px; letter-spacing: -.14px; }
.bm { display: flex; align-items: center; white-space: nowrap; }
.bm-ico { width: 30px; height: 31px; margin-right: 17px; flex: none; }
.bm-pin { width: 26px; height: 32px; margin-right: 18px; margin-left: -1px; }
.dev { display: block; flex: none; width: 31px; height: 31px; margin-right: 17px; background: #0a0a0a; color: #fff; font: 700 15px/31px "DejaVu Sans Mono", monospace; text-align: center; letter-spacing: -1.500px; }
.co-text { font: 700 11px Inter, sans-serif; fill: #eccad7; text-anchor: middle; }
.bm-more { font-size: 28px; line-height: 1; margin-top: -4px; }

/* page */
.page { flex: 0 0 1310px; background: #f0ffff; color: #212529; font-size: 32px; line-height: 48px; letter-spacing: -.65px; position: relative; }
.page-head { height: 143px; background: #343a40; color: #fff; text-align: center; padding-top: 18px; }
h1 { margin: 0; font-size: 80px; line-height: 96px; font-weight: 500; letter-spacing: -3.950px; -webkit-text-stroke: .5px currentColor; }
.content { display: flex; padding: 82px 0 0 426px; }
.search { flex: 0 0 611px; min-width: 0; }
h2 { margin: 0 0 15px; font-size: 64px; line-height: 77px; font-weight: 500; letter-spacing: -2.900px; white-space: nowrap; -webkit-text-stroke: .7px currentColor; }
h3 { margin: 0 0 16px; font-size: 56px; line-height: 67px; font-weight: 500; letter-spacing: -.45px; white-space: nowrap; -webkit-text-stroke: .3px currentColor; }
.city { letter-spacing: -2.200px; -webkit-text-stroke: .6px currentColor; }
p { margin: 0 0 32px; white-space: nowrap; }
.city-input { display: block; width: 369px; height: 61px; border: 2px solid #767676; border-radius: 4px; background: #fff; color: #000; font: 32px Inter, sans-serif; letter-spacing: -.65px; padding: 0 6px; outline: 0; }
.btn-row { display: flex; height: 76px; margin: 0; white-space: nowrap; }
.btn { flex: none; height: 76px; padding: 0 24px; border: 2px solid transparent; border-radius: 8px; background: transparent; color: #212529; font: 32px/48px Inter, sans-serif; letter-spacing: -.65px; }
.btn-focus { margin-right: 6px; box-shadow: 0 0 0 6px #c2dffe; }
.forecast { display: flex; padding: 79px 0 0 80px; }
.day { flex: none; letter-spacing: -.8px; }
.day:first-child { min-width: 229px; }
.wx { display: block; width: 200px; height: 200px; margin-bottom: 1px; }

.page-foot { flex: 1; background: #fff; background-image: linear-gradient(#fff 70%, #f7f7f7); }

/* dock */
.dock { flex: 0 0 97px; margin: 60px 0 0 62px; width: 2753px; height: 97px; display: flex; align-items: flex-start; gap: 20px; padding: 13px 0 0 13px; background: #121212; border: 2px solid #343434; border-radius: 32px; position: relative; }
.app { position: relative; flex: none; width: 61px; height: 62px; }
.app > svg { display: block; width: 61px; height: 62px; }
.app.on::after { content: ""; position: absolute; left: 26px; top: 71px; width: 8px; height: 8px; border-radius: 50%; background: #7c7c7c; }
.badge { position: absolute; right: -7px; top: -8px; min-width: 28px; height: 28px; border-radius: 14px; background: #e64a3c; color: #fff; font-size: 17px; font-weight: 500; line-height: 28px; text-align: center; }
.dock-sep { flex: none; width: 2px; height: 70px; background: #555; margin: -2px 5px 0 9px; }
.dock-sep-2 { margin: -2px 13px 0 9px; }
.doc { width: 46px; margin-right: 6px; }
.doc > svg { width: 46px; height: 72px; margin-top: -7px; }
.thumb { width: 66px; }
.thumb-art > svg { width: 66px; height: 72px; margin-top: -5px; }
.thumb-code, .thumb-code2 { width: 72px; margin-left: -9px; }
.thumb-code2 { margin-left: -10px; }
.thumb-code > svg { width: 72px; height: 64px; margin-top: -1px; }
.thumb-code2 > svg { width: 72px; height: 61px; margin-top: 4px; }
.trash { width: 54px; margin-left: -5px; }
.trash > svg { width: 54px; height: 70px; margin-top: -5px; }
.cal-mon { font: 600 11px Inter, sans-serif; fill: #fff; text-anchor: middle; }
.cal-day { font: 300 34px Inter, sans-serif; fill: #333; text-anchor: middle; }
.tv-text { font: 500 26px Inter, sans-serif; fill: #eee; }
.term { font: 15px "DejaVu Sans Mono", monospace; fill: #fff; }
.adobe { font: 700 32px Inter, sans-serif; text-anchor: middle; }
.ai { fill: #ff9a00; }
.ps { fill: #31a8ff; }
.zoom-text { font: 600 15px Inter, sans-serif; fill: #fff; text-anchor: middle; }
.zip { font: 11px Inter, sans-serif; fill: #888; text-anchor: middle; }
```
